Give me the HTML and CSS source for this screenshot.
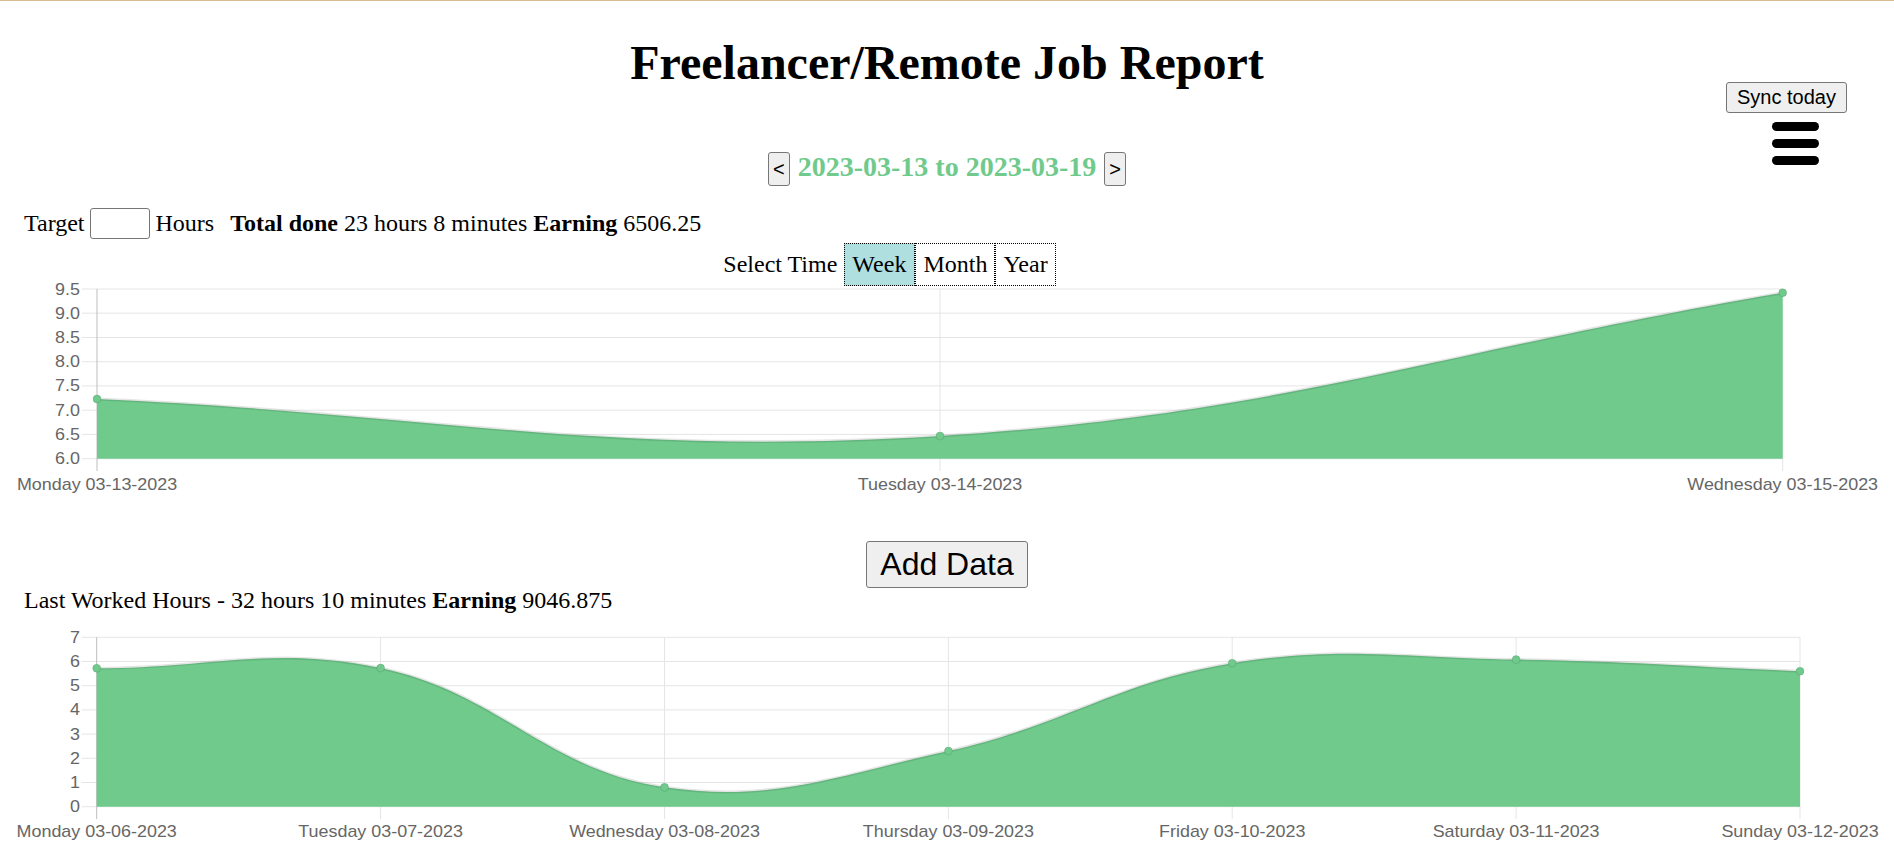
FILE: index.html
```html
<!DOCTYPE html>
<html lang="en">
<head>
<meta charset="utf-8">
<title>Freelancer/Remote Job Report</title>
<link rel="stylesheet" href="styles.css">
</head>
<body>
<div class="topline"></div>
<header class="header">
  <h1 class="title">Freelancer/Remote Job Report</h1>
  <div class="menu">
    <button class="btn sync" type="button">Sync today</button>
    <div class="burger" aria-label="menu"><span></span><span></span><span></span></div>
  </div>
</header>

<nav class="week-nav">
  <button class="btn arrow" type="button">&lt;</button>
  <h3 class="range">2023-03-13 to 2023-03-19</h3>
  <button class="btn arrow" type="button">&gt;</button>
</nav>

<div class="summary">
  <label class="target-label" for="target">Target</label>
  <input class="target" id="target" type="text">
  <span class="hours">Hours</span>
  <span class="totals"><b>Total done</b> 23 hours 8 minutes <b>Earning</b> 6506.25</span>
</div>

<div class="select-row">
  <span class="select-label">Select Time</span>
  <div class="seg">
    <span class="seg-item active">Week</span><span class="seg-item">Month</span><span class="seg-item">Year</span>
  </div>
</div>

<svg class="chart chart-week" width="1878" height="210" viewBox="8 287 1878 210" xmlns="http://www.w3.org/2000/svg">
  <g class="grid">
    <line x1="82" y1="289" x2="1782.7" y2="289"/>
    <line x1="82" y1="313.2" x2="1782.7" y2="313.2"/>
    <line x1="82" y1="337.5" x2="1782.7" y2="337.5"/>
    <line x1="82" y1="361.7" x2="1782.7" y2="361.7"/>
    <line x1="82" y1="385.9" x2="1782.7" y2="385.9"/>
    <line x1="82" y1="410.2" x2="1782.7" y2="410.2"/>
    <line x1="82" y1="434.4" x2="1782.7" y2="434.4"/>
    <line x1="82" y1="458.7" x2="1782.7" y2="458.7"/>
    <line x1="940" y1="289" x2="940" y2="471"/>
    <line x1="1782.7" y1="289" x2="1782.7" y2="471"/>
    <line class="axis" x1="97" y1="289" x2="97" y2="471"/>
  </g>
  <g class="ylabels">
    <text transform="translate(80 294.5) scale(1.12 1)">9.5</text>
    <text transform="translate(80 318.7) scale(1.12 1)">9.0</text>
    <text transform="translate(80 343) scale(1.12 1)">8.5</text>
    <text transform="translate(80 367.2) scale(1.12 1)">8.0</text>
    <text transform="translate(80 391.4) scale(1.12 1)">7.5</text>
    <text transform="translate(80 415.7) scale(1.12 1)">7.0</text>
    <text transform="translate(80 439.9) scale(1.12 1)">6.5</text>
    <text transform="translate(80 464.2) scale(1.12 1)">6.0</text>
  </g>
  <g class="xlabels">
    <text transform="translate(97 490) scale(1.12 1)">Monday 03-13-2023</text>
    <text transform="translate(940 490) scale(1.12 1)">Tuesday 03-14-2023</text>
    <text transform="translate(1782.7 490) scale(1.12 1)">Wednesday 03-15-2023</text>
  </g>
  <path class="area" d="M97,399 C434.2,413.8 605,457.1 940,436 C1279.3,414.6 1445.6,350 1782.7,292.7 L1782.7,458.7 L97,458.7 Z"/>
  <path class="line" d="M97,399 C434.2,413.8 605,457.1 940,436 C1279.3,414.6 1445.6,350 1782.7,292.7"/>
  <g class="points">
    <circle cx="97" cy="399" r="4"/>
    <circle cx="940" cy="436" r="4"/>
    <circle cx="1782.7" cy="292.7" r="4"/>
  </g>
</svg>

<div class="add-row">
  <button class="btn add" type="button">Add Data</button>
</div>

<div class="last">Last Worked Hours - 32 hours 10 minutes <b>Earning</b> 9046.875</div>

<svg class="chart chart-last" width="1878" height="236" viewBox="8 614 1878 236" xmlns="http://www.w3.org/2000/svg">
  <g class="grid">
    <line x1="81.7" y1="637.3" x2="1800" y2="637.3"/>
    <line x1="81.7" y1="661.5" x2="1800" y2="661.5"/>
    <line x1="81.7" y1="685.7" x2="1800" y2="685.7"/>
    <line x1="81.7" y1="709.9" x2="1800" y2="709.9"/>
    <line x1="81.7" y1="734.1" x2="1800" y2="734.1"/>
    <line x1="81.7" y1="758.3" x2="1800" y2="758.3"/>
    <line x1="81.7" y1="782.5" x2="1800" y2="782.5"/>
    <line x1="81.7" y1="806.7" x2="1800" y2="806.7"/>
    <line x1="380.6" y1="637.3" x2="380.6" y2="819"/>
    <line x1="664.5" y1="637.3" x2="664.5" y2="819"/>
    <line x1="948.4" y1="637.3" x2="948.4" y2="819"/>
    <line x1="1232.2" y1="637.3" x2="1232.2" y2="819"/>
    <line x1="1516.1" y1="637.3" x2="1516.1" y2="819"/>
    <line x1="1800" y1="637.3" x2="1800" y2="819"/>
    <line class="axis" x1="96.7" y1="637.3" x2="96.7" y2="819"/>
  </g>
  <g class="ylabels">
    <text transform="translate(80 642.8) scale(1.12 1)">7</text>
    <text transform="translate(80 667) scale(1.12 1)">6</text>
    <text transform="translate(80 691.2) scale(1.12 1)">5</text>
    <text transform="translate(80 715.4) scale(1.12 1)">4</text>
    <text transform="translate(80 739.6) scale(1.12 1)">3</text>
    <text transform="translate(80 763.8) scale(1.12 1)">2</text>
    <text transform="translate(80 788) scale(1.12 1)">1</text>
    <text transform="translate(80 812.2) scale(1.12 1)">0</text>
  </g>
  <g class="xlabels">
    <text transform="translate(96.7 837) scale(1.12 1)">Monday 03-06-2023</text>
    <text transform="translate(380.6 837) scale(1.12 1)">Tuesday 03-07-2023</text>
    <text transform="translate(664.5 837) scale(1.12 1)">Wednesday 03-08-2023</text>
    <text transform="translate(948.4 837) scale(1.12 1)">Thursday 03-09-2023</text>
    <text transform="translate(1232.2 837) scale(1.12 1)">Friday 03-10-2023</text>
    <text transform="translate(1516.1 837) scale(1.12 1)">Saturday 03-11-2023</text>
    <text transform="translate(1800 837) scale(1.12 1)">Sunday 03-12-2023</text>
  </g>
  <path class="area" d="M96.7,668.3 C210.3,668.2 271.6,645.2 380.6,668 C498.8,692.8 546.8,770.1 664.5,787.3 C773.9,803.3 837,775.3 948.4,751 C1064.1,725.7 1116,681.9 1232.2,663.2 C1343.2,645.3 1402.6,658 1516.1,659.6 C1629.7,661.2 1686.4,666.6 1800,671.2 L1800,806.7 L96.7,806.7 Z"/>
  <path class="line" d="M96.7,668.3 C210.3,668.2 271.6,645.2 380.6,668 C498.8,692.8 546.8,770.1 664.5,787.3 C773.9,803.3 837,775.3 948.4,751 C1064.1,725.7 1116,681.9 1232.2,663.2 C1343.2,645.3 1402.6,658 1516.1,659.6 C1629.7,661.2 1686.4,666.6 1800,671.2"/>
  <g class="points">
    <circle cx="96.7" cy="668.3" r="4"/>
    <circle cx="380.6" cy="668" r="4"/>
    <circle cx="664.5" cy="787.3" r="4"/>
    <circle cx="948.4" cy="751" r="4"/>
    <circle cx="1232.2" cy="663.2" r="4"/>
    <circle cx="1516.1" cy="659.6" r="4"/>
    <circle cx="1800" cy="671.2" r="4"/>
  </g>
</svg>
</body>
</html>
```

FILE: styles.css
```css
* {
  box-sizing: border-box;
}

html,
body {
  margin: 0;
  padding: 0;
}

body {
  padding: 0 8px;
  height: 852px;
  overflow: hidden;
  background: #fff;
  color: #000;
  font-family: "Liberation Serif", "Times New Roman", serif;
  font-size: 24px;
}

.topline {
  height: 1px;
  margin: 0 -8px;
  background: #d9bb93;
}

.title {
  margin: 34px 0 0;
  font-size: 48px;
  font-weight: bold;
  line-height: normal;
  text-align: center;
}

.menu {
  position: absolute;
  top: 82px;
  left: 1726px;
  display: flex;
  flex-direction: column;
  align-items: flex-start;
  gap: 9px;
}

.btn {
  margin: 0;
  padding: 0;
  background: #efefef;
  border: 1px solid #767676;
  border-radius: 3px;
  color: #000;
  font-family: "Liberation Sans", Arial, sans-serif;
}

.sync {
  height: 31px;
  padding: 0 10px;
  font-size: 20px;
}

.burger {
  margin-left: 46px;
  display: flex;
  flex-direction: column;
  gap: 8px;
}

.burger span {
  display: block;
  width: 47px;
  height: 9px;
  border-radius: 5px;
  background: #000;
}

.week-nav {
  display: flex;
  justify-content: center;
  align-items: flex-start;
  gap: 8px;
  height: 34px;
  margin-top: 62px;
}

.arrow {
  height: 34px;
  padding: 0 4px;
  font-size: 20px;
}

.range {
  margin: -1px 0 0;
  color: #6fca8c;
  font-size: 28px;
  font-weight: bold;
  line-height: 31px;
}

.summary {
  display: flex;
  align-items: center;
  height: 31px;
  margin-top: 22px;
  padding-left: 16px;
}

.target-label {
  margin-right: 5px;
}

.target {
  width: 60px;
  height: 31px;
  margin: 0;
  padding: 0 4px;
  border: 1px solid #767676;
  border-radius: 3px;
  font-size: 16px;
}

.hours {
  margin-left: 6px;
}

.totals {
  margin-left: 16px;
}

.select-row {
  display: flex;
  justify-content: center;
  align-items: center;
  height: 43px;
  margin-top: 4px;
  padding-right: 115px;
}

.select-label {
  margin-right: 7px;
}

.seg {
  display: flex;
}

.seg-item {
  display: flex;
  align-items: center;
  height: 43px;
  padding: 0 7px;
  border: 1px dotted #000;
}

.seg-item.active {
  padding: 0 8px 0 7px;
  background: #b0dfe0;
}

.chart {
  display: block;
  overflow: visible;
}

.chart-week {
  margin-top: 1px;
}

.chart .grid line {
  stroke: #e5e5e5;
  stroke-width: 1;
}

.chart .grid line.axis {
  stroke: #bdbdbd;
}

.chart text {
  fill: #666;
  font-family: "Liberation Sans", Arial, sans-serif;
  font-size: 16px;
}

.chart .ylabels text {
  text-anchor: end;
}

.chart .xlabels text {
  text-anchor: middle;
}

.chart .area {
  fill: #6fca8c;
}

.chart .line {
  fill: none;
  stroke: rgba(0, 0, 0, 0.1);
  stroke-width: 3;
}

.chart .points circle {
  fill: #6fca8c;
  stroke: rgba(0, 0, 0, 0.1);
  stroke-width: 1;
}

.add-row {
  display: flex;
  justify-content: center;
  margin-top: 44px;
}

.add {
  height: 47px;
  padding: 0 13px;
  font-size: 32px;
}

.last {
  padding-left: 16px;
  line-height: 24px;
}

.chart-last {
  margin-top: 2px;
}
```
